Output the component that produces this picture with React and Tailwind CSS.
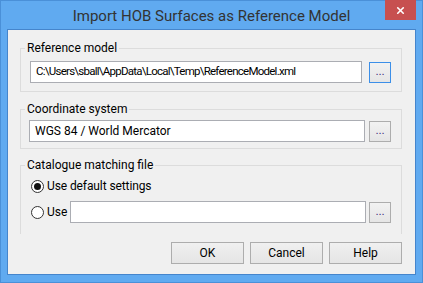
import { X } from 'lucide-react';

const ui = { fontFamily: 'Roboto, "Open Sans", sans-serif' };
const ms = { fontFamily: '"Liberation Sans", Arial, sans-serif' };

function Browse({ focused }) {
  return (
    <button
      className={
        'w-[22px] h-[21px] shrink-0 border text-[11px] leading-none pb-[2px] bg-gradient-to-b from-[#f2f2f2] to-[#e5e5e5] text-[#3a2a7a] ' +
        (focused ? 'border-[#3c8fe8]' : 'border-[#adadad]')
      }
      style={ms}
    >
      ...
    </button>
  );
}

function Radio({ checked }) {
  return (
    <span className="w-[13px] h-[13px] rounded-full border border-[#333] bg-white flex items-center justify-center shrink-0">
      {checked && <span className="w-[7px] h-[7px] rounded-full bg-[#111]" />}
    </span>
  );
}

function DlgButton({ children }) {
  return (
    <button className="w-[73px] h-[22px] border border-[#adadad] bg-gradient-to-b from-[#f0f0f0] to-[#e5e5e5] text-[12px] text-black" style={ui}>
      {children}
    </button>
  );
}

export default function App() {
  return (
    <div className="w-[423px] h-[283px] bg-[#60aaf0] border border-[#4a90d8] flex flex-col px-[6px] pb-[7px]">
      {/* title bar */}
      <div className="h-[28px] grid grid-cols-[1fr_auto_1fr] items-start">
        <div />
        <div className="text-[15px] text-[#333] pt-[5px] leading-[20px]" style={ui}>
          Import HOB Surfaces as Reference Model
        </div>
        <div className="flex justify-end">
          <div className="w-[31px] h-[20px] -mt-px bg-[#c75050] flex items-center justify-center">
            <X className="w-[11px] h-[11px] text-white" strokeWidth={3.5} />
          </div>
        </div>
      </div>

      {/* client area */}
      <div className="flex-1 bg-[#f0f0f0] border border-[#4585cc] flex flex-col pl-[12px] pr-[13px] pt-[11px] text-black" style={ui}>
        <fieldset className="border border-[#dcdcdc] pl-[9px] pr-[10px] pb-[8px] pt-[5px]">
          <legend className="text-[12px] px-[2px] ml-[-5px] leading-[15px]">Reference model</legend>
          <div className="flex items-center gap-[7px]">
            <div className="flex-1 h-[22px] bg-white border border-[#abadb3] flex items-center px-[5px] text-[11.5px] tracking-[-0.75px] whitespace-nowrap overflow-hidden">
              C:\Users\sball\AppData\Local\Temp\ReferenceModel.xml
            </div>
            <Browse focused />
          </div>
        </fieldset>

        <fieldset className="border border-[#dcdcdc] pl-[8px] pr-[10px] pb-[6px] pt-[3px] mt-[10px]">
          <legend className="text-[12px] px-[2px] ml-[-4px] leading-[15px]">Coordinate system</legend>
          <div className="flex items-center gap-[4px]">
            <div className="flex-1 h-[22px] bg-white border border-[#abadb3] flex items-center px-[5px] text-[12px]">
              WGS 84 / World Mercator
            </div>
            <Browse />
          </div>
        </fieldset>

        <fieldset className="border border-[#dcdcdc] border-b-0 pl-[10px] pr-[10px] pt-[3px] mt-[9px] h-[76px]">
          <legend className="text-[12px] px-[2px] ml-[-6px] leading-[15px]">Catalogue matching file</legend>
          <div className="flex items-center gap-[3px] h-[20px]">
            <Radio checked />
            <span className="text-[12px] tracking-[-0.1px]">Use default settings</span>
          </div>
          <div className="flex items-center gap-[3px] mt-[5px]">
            <Radio />
            <span className="text-[12px] w-[19px] mr-[1px]">Use</span>
            <div className="flex-1 h-[22px] bg-white border border-[#abadb3]" />
            <Browse />
          </div>
        </fieldset>

        <div className="flex justify-end gap-[6px] mt-[8px]">
          <DlgButton>OK</DlgButton>
          <DlgButton>Cancel</DlgButton>
          <DlgButton>Help</DlgButton>
        </div>
      </div>
    </div>
  );
}
